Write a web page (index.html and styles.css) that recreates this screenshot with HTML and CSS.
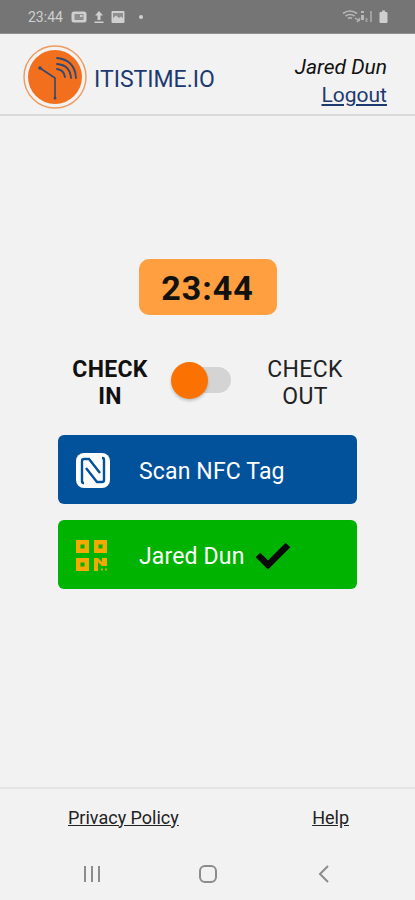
FILE: index.html
```html
<!DOCTYPE html>
<html lang="en">
<head>
  <meta charset="UTF-8">
  <meta name="viewport" content="width=device-width, initial-scale=1.0">
  <title>ITISTIME.IO</title>
  <link rel="stylesheet" href="styles.css">
</head>
<body>

  <!-- Status Bar -->
  <div class="statusbar">
    <div class="status-left">
      <span class="status-time">23:44</span>
      <svg class="status-icon" width="16" height="14" viewBox="0 0 16 14">
        <rect x="0.500" y="1.500" width="15" height="11" rx="2.500" fill="#cfcfcf"/>
        <rect x="3.500" y="4" width="9" height="6" fill="#8f8f8f"/>
        <rect x="9" y="5" width="2.500" height="2" fill="#cfcfcf"/>
      </svg>
      <svg class="status-icon" width="10" height="14" viewBox="0 0 10 14">
        <path d="M5 1 L9 5.500 H6.500 V10 H3.500 V5.500 H1 Z" fill="#cfcfcf"/>
        <rect x="0.500" y="11.500" width="9" height="1.500" fill="#cfcfcf"/>
      </svg>
      <svg class="status-icon" width="14" height="14" viewBox="0 0 14 14">
        <rect x="0.500" y="1" width="13" height="12" rx="1" fill="#cfcfcf"/>
        <path d="M2 8 L5 5.500 L8 8 L10 6.500 L12 8 V3 H2 Z" fill="#8f8f8f"/>
      </svg>
      <span class="status-dot"></span>
    </div>
    <div class="status-right">
      <svg width="19" height="13" viewBox="0 0 19 13">
        <path d="M1 3.500 Q8 -1.500 15 3.500 M3.500 6 Q8 3 12.500 6 M6 8.500 Q8 7 10 8.500" fill="none" stroke="#b8b8b8" stroke-width="1.600"/>
        <path d="M13 8 L18 11 M15 12 L18 8" stroke="#b8b8b8" stroke-width="1.300"/>
      </svg>
      <svg width="12" height="13" viewBox="0 0 12 13">
        <rect x="0" y="5" width="3" height="5" fill="#b8b8b8"/>
        <rect x="0" y="1" width="3" height="2" fill="#b8b8b8"/>
        <rect x="4.500" y="8" width="2" height="4" fill="#a0a0a0"/>
        <rect x="9" y="1" width="2" height="11" fill="#a0a0a0"/>
      </svg>
      <svg class="battery" width="9" height="14" viewBox="0 0 9 14">
        <rect x="3" y="0.500" width="3" height="2" fill="#cfcfcf"/>
        <rect x="0.500" y="2" width="8" height="11" rx="1" fill="#cfcfcf"/>
      </svg>
    </div>
  </div>

  <!-- Header -->
  <div class="header">
    <div class="brand">
      <svg class="logo" width="64" height="64" viewBox="0 0 64 64">
        <circle cx="32" cy="32" r="31" fill="none" stroke="#ee9a5c" stroke-width="1.400"/>
        <circle cx="32" cy="32" r="27" fill="#f26f1d"/>
        <g fill="none" stroke="#2d4a73" stroke-linecap="round">
          <path d="M17 23 L32 33 L32 53" stroke-width="1.600"/>
          <path d="M34 24 Q41 25 42 32" stroke-width="1.800"/>
          <path d="M34 19 Q47 20 48 33" stroke-width="1.800"/>
          <path d="M34 13 Q52 15 53 33" stroke-width="1.800"/>
        </g>
        <circle cx="17" cy="23" r="1.800" fill="#2d4a73"/>
        <circle cx="32" cy="53" r="1.500" fill="#2d4a73"/>
      </svg>
      <span class="brand-name">ITISTIME.IO</span>
    </div>
    <div class="user">
      <div class="user-name">Jared Dun</div>
      <a class="logout" href="#">Logout</a>
    </div>
  </div>

  <!-- Main Section -->
  <div class="content">
    <div class="clock">23:44</div>

    <div class="check-row">
      <div class="check-label active">CHECK<br>IN</div>
      <div class="toggle">
        <div class="toggle-track"></div>
        <div class="toggle-knob"></div>
      </div>
      <div class="check-label">CHECK<br>OUT</div>
    </div>

    <div class="action-btn nfc-btn">
      <div class="btn-icon">
        <svg width="34" height="35" viewBox="0 0 34 35">
          <rect x="0" y="0" width="34" height="35" rx="8" fill="#fff"/>
          <path d="M8 30 H7.500 Q6 30 6 28 V8 Q6 6 8 6 H13 L24 20" fill="none" stroke="#01529b" stroke-width="2.400"/>
          <path d="M26 5 H26.500 Q28 5 28 7 V27 Q28 29 26 29 H21 L10 15" fill="none" stroke="#01529b" stroke-width="2.400"/>
        </svg>
      </div>
      <span class="btn-text">Scan NFC Tag</span>
    </div>

    <div class="action-btn qr-btn">
      <div class="btn-icon">
        <svg width="32" height="32" viewBox="0 0 32 32">
          <g fill="none" stroke="#f5a800" stroke-width="4.500">
            <rect x="2.250" y="2.250" width="8.500" height="8.500"/>
            <rect x="20.250" y="2.250" width="8.500" height="8.500"/>
            <rect x="2.250" y="20.250" width="8.500" height="8.500"/>
          </g>
          <path d="M18 18 H22 L26 22 V18 H31 V26 H26 L22 22 V31 H18 Z" fill="#f5a800"/>
          <rect x="25" y="28.500" width="2" height="2" fill="#d8a800"/>
          <rect x="29" y="28.500" width="2" height="2" fill="#d8a800"/>
        </svg>
      </div>
      <span class="btn-text">Jared Dun</span>
      <svg class="tick" width="36" height="28" viewBox="0 0 36 28">
        <path d="M3 13 L13 23 L33 3" fill="none" stroke="#0a0a0a" stroke-width="6.500"/>
      </svg>
    </div>
  </div>

  <!-- Footer -->
  <div class="footer">
    <a href="#">Privacy Policy</a>
    <a href="#">Help</a>
  </div>

  <!-- Navigation Bar -->
  <div class="navbar">
    <svg width="18" height="18" viewBox="0 0 18 18">
      <path d="M2 1 V17 M9 1 V17 M16 1 V17" stroke="#8c8c8c" stroke-width="2"/>
    </svg>
    <svg class="nav-home" width="20" height="18" viewBox="0 0 20 18">
      <rect x="2" y="1" width="16" height="16" rx="5" fill="none" stroke="#8c8c8c" stroke-width="2"/>
    </svg>
    <svg width="12" height="18" viewBox="0 0 12 18">
      <path d="M10 1 L2 9 L10 17" fill="none" stroke="#8c8c8c" stroke-width="2"/>
    </svg>
  </div>

</body>
</html>
```

FILE: styles.css
```css
body {
  background-color: #f2f2f2;
  color: #111;
  font-family: Roboto, "Liberation Sans", sans-serif;
  margin: 0;
  padding: 0;
  width: 415px;
  height: 900px;
  display: flex;
  flex-direction: column;
  overflow: hidden;
}

.statusbar {
  height: 33px;
  background-color: #757575;
  border-bottom: 1px solid #8f8f8f;
  display: flex;
  justify-content: space-between;
  align-items: center;
  padding: 0 27px 0 28px;
  color: #cfcfcf;
  flex-shrink: 0;
}

.status-left,
.status-right {
  display: flex;
  align-items: center;
}

.status-left {
  gap: 7px;
}

.status-time {
  font-size: 14px;
  margin-right: 1px;
}

.status-dot {
  width: 4px;
  height: 4px;
  border-radius: 50%;
  background-color: #cfcfcf;
  margin-left: 7px;
}

.battery {
  margin-left: 6px;
}

.header {
  height: 74px;
  padding: 6px 28px 0 23px;
  border-bottom: 2px solid #d9d9d9;
  display: flex;
  justify-content: space-between;
  align-items: center;
  flex-shrink: 0;
}

.brand {
  display: flex;
  align-items: center;
  gap: 7px;
}

.brand-name {
  font-size: 23px;
  color: #1d3a70;
  margin-top: 4px;
}

.user {
  text-align: right;
  margin-top: 8px;
}

.user-name {
  font-size: 21px;
  font-style: italic;
  line-height: 28px;
}

.logout {
  color: #1d3a70;
  font-size: 21px;
  line-height: 28px;
}

.content {
  flex: 1;
  display: flex;
  flex-direction: column;
  align-items: center;
  padding-top: 143px;
}

.clock {
  width: 138px;
  height: 56px;
  line-height: 59px;
  background-color: #ff9f40;
  border-radius: 10px;
  text-align: center;
  font-size: 34px;
  font-weight: bold;
  letter-spacing: 1px;
}

.check-row {
  width: 299px;
  margin-top: 41px;
  display: flex;
  align-items: center;
  justify-content: space-between;
}

.check-label {
  width: 104px;
  text-align: center;
  font-size: 23px;
  line-height: 27px;
  letter-spacing: 0.3px;
  color: #222;
}

.check-label.active {
  font-weight: bold;
  color: #111;
}

.toggle {
  position: relative;
  width: 60px;
  height: 38px;
  margin: -4px auto 0 9px;
}

.toggle-track {
  position: absolute;
  left: 18px;
  top: 5px;
  width: 42px;
  height: 26px;
  border-radius: 13px;
  background-color: #d4d4d4;
}

.toggle-knob {
  position: absolute;
  left: 0;
  top: 0;
  width: 37px;
  height: 37px;
  border-radius: 50%;
  background-color: #fb7203;
  box-shadow: 0 2px 3px rgba(0, 0, 0, 0.2);
}

.action-btn {
  width: 299px;
  height: 69px;
  border-radius: 6px;
  display: flex;
  align-items: center;
  color: #fff;
  font-size: 23px;
}

.btn-text {
  margin-top: 3px;
  letter-spacing: 0.15px;
}

.nfc-btn {
  background-color: #01529b;
  margin-top: 25px;
}

.qr-btn {
  background-color: #00b300;
  margin-top: 16px;
}

.btn-icon {
  width: 81px;
  padding-left: 18px;
  box-sizing: border-box;
  display: flex;
  flex-shrink: 0;
  margin-top: 2px;
}

.tick {
  margin-left: 11px;
  margin-top: 2px;
}

.footer {
  height: 56px;
  padding: 0 66px 4px 68px;
  border-top: 2px solid #e4e4e4;
  display: flex;
  align-items: center;
  justify-content: space-between;
  font-size: 18px;
  flex-shrink: 0;
}

.footer a {
  color: #222;
}

.navbar {
  height: 49px;
  display: flex;
  align-items: center;
  justify-content: space-between;
  padding: 0 85px 2px 83px;
  flex-shrink: 0;
}

.nav-home {
  margin-right: 4px;
}
```
